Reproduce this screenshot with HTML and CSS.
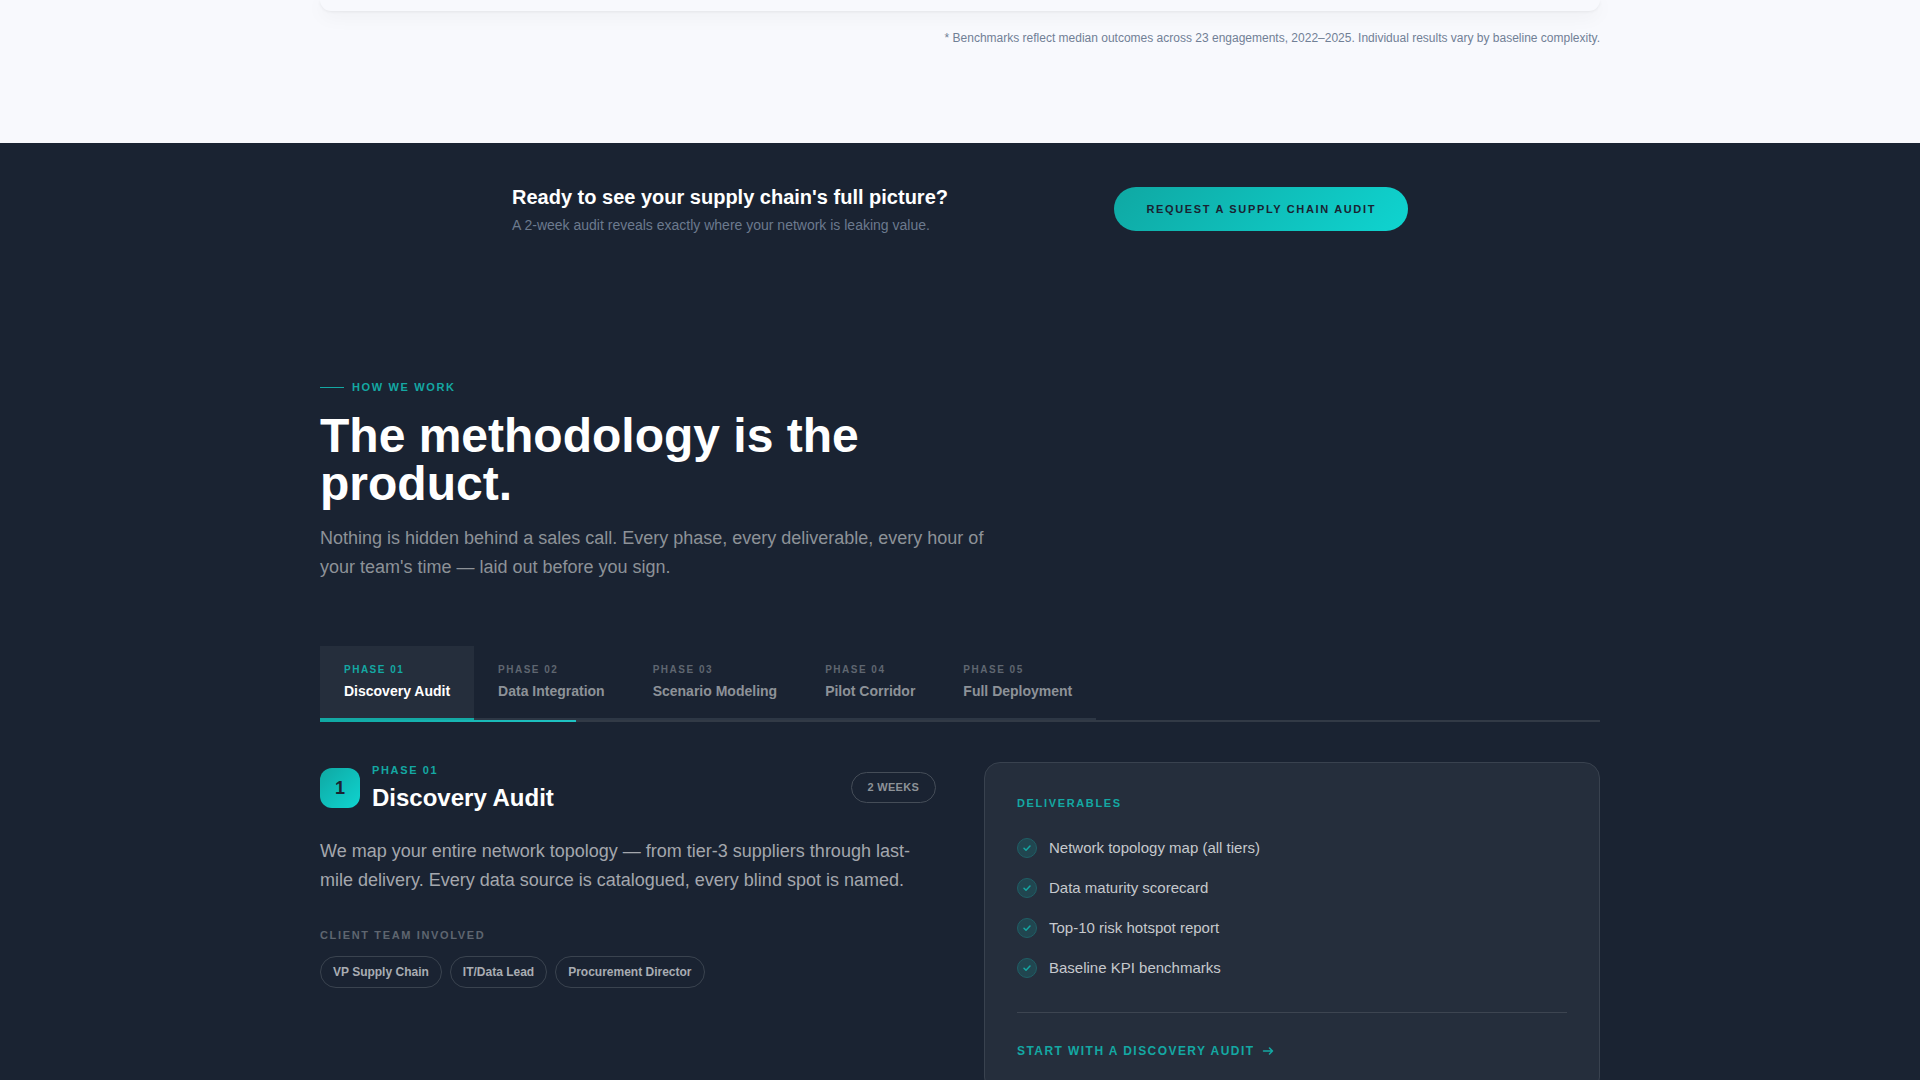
FILE: index.html
```html
<!DOCTYPE html>
<html lang="en">

<head>
    <meta charset="UTF-8">
    <meta name="viewport" content="width=device-width, initial-scale=1.0">
    <title>How we work</title>
    <link rel="stylesheet" href="styles.css">
</head>

<body>
    <section class="benchmarks">
        <div class="container">
            <div class="benchmarks-card"></div>
            <p class="footnote">* Benchmarks reflect median outcomes across 23 engagements, 2022–2025. Individual results vary by baseline complexity.</p>
        </div>
    </section>

    <section class="cta">
        <div class="cta-inner">
            <div>
                <h3 class="cta-title">Ready to see your supply chain's full picture?</h3>
                <p class="cta-text">A 2-week audit reveals exactly where your network is leaking value.</p>
            </div>
            <button class="cta-button" type="button">REQUEST A SUPPLY CHAIN AUDIT</button>
        </div>
    </section>

    <section class="method">
        <div class="container">
            <div class="eyebrow">HOW WE WORK</div>
            <h2 class="method-title">The methodology is the product.</h2>
            <p class="method-lead">Nothing is hidden behind a sales call. Every phase, every deliverable, every hour of your team's time — laid out before you sign.</p>

            <div class="tabs" role="tablist">
                <button class="tab active" type="button" role="tab" aria-selected="true">
                    <span class="tab-phase">PHASE 01</span>
                    <span class="tab-name">Discovery Audit</span>
                </button>
                <button class="tab" type="button" role="tab">
                    <span class="tab-phase">PHASE 02</span>
                    <span class="tab-name">Data Integration</span>
                </button>
                <button class="tab" type="button" role="tab">
                    <span class="tab-phase">PHASE 03</span>
                    <span class="tab-name">Scenario Modeling</span>
                </button>
                <button class="tab" type="button" role="tab">
                    <span class="tab-phase">PHASE 04</span>
                    <span class="tab-name">Pilot Corridor</span>
                </button>
                <button class="tab" type="button" role="tab">
                    <span class="tab-phase">PHASE 05</span>
                    <span class="tab-name">Full Deployment</span>
                </button>
            </div>
            <div class="progress">
                <div class="progress-bar" style="width: 20%"></div>
            </div>

            <div class="panel">
                <div>
                    <div class="phase-head">
                        <div class="phase-number">1</div>
                        <div>
                            <div class="label teal">PHASE 01</div>
                            <h3 class="phase-title">Discovery Audit</h3>
                        </div>
                        <span class="duration">2 WEEKS</span>
                    </div>
                    <p class="phase-text">We map your entire network topology — from tier-3 suppliers through last-mile delivery. Every data source is catalogued, every blind spot is named.</p>
                    <div class="label muted">CLIENT TEAM INVOLVED</div>
                    <ul class="team">
                        <li>VP Supply Chain</li>
                        <li>IT/Data Lead</li>
                        <li>Procurement Director</li>
                    </ul>
                </div>

                <div class="card">
                    <div class="label teal">DELIVERABLES</div>
                    <ul class="deliverables">
                        <li>
                            <span class="check"><svg width="10" height="10" viewBox="0 0 10 10"><path d="M2 5.2 4 7.2 8 3" /></svg></span>
                            Network topology map (all tiers)
                        </li>
                        <li>
                            <span class="check"><svg width="10" height="10" viewBox="0 0 10 10"><path d="M2 5.2 4 7.2 8 3" /></svg></span>
                            Data maturity scorecard
                        </li>
                        <li>
                            <span class="check"><svg width="10" height="10" viewBox="0 0 10 10"><path d="M2 5.2 4 7.2 8 3" /></svg></span>
                            Top-10 risk hotspot report
                        </li>
                        <li>
                            <span class="check"><svg width="10" height="10" viewBox="0 0 10 10"><path d="M2 5.2 4 7.2 8 3" /></svg></span>
                            Baseline KPI benchmarks
                        </li>
                    </ul>
                    <div class="card-footer">
                        <a class="card-link" href="#">START WITH A DISCOVERY AUDIT
                            <svg width="12" height="12" viewBox="0 0 12 12"><path d="M1.500 6h9M7.500 3l3 3-3 3" /></svg>
                        </a>
                    </div>
                </div>
            </div>
        </div>
    </section>
</body>

</html>
```

FILE: styles.css
```css
* {
    box-sizing: border-box;
    margin: 0;
    padding: 0;
}

body {
    font-family: "Liberation Sans", Arial, sans-serif;
    background-color: #1a2332;
    color: #ffffff;
}

ul {
    list-style: none;
}

button {
    font-family: inherit;
    border: none;
    cursor: pointer;
}

.container {
    max-width: 1280px;
    margin: 0 auto;
}

/* end of the benchmarks section */
.benchmarks {
    background-color: #f8f9fd;
    padding-bottom: 96px;
}

.benchmarks-card {
    height: 11px;
    border-radius: 0 0 16px 16px;
    background-color: #f8f9fd;
    box-shadow: 0 1px 3px rgba(0, 0, 0, 0.06), 0 4px 20px rgba(0, 0, 0, 0.06);
}

.footnote {
    margin-top: 18px;
    font-size: 12px;
    line-height: 18px;
    text-align: right;
    color: #718096;
}

/* call to action */
.cta {
    padding: 40px 0;
}

.cta-inner {
    max-width: 896px;
    margin: 0 auto;
    display: flex;
    align-items: center;
    justify-content: space-between;
}

.cta-title {
    font-size: 20px;
    line-height: 28px;
}

.cta-text {
    margin-top: 4px;
    font-size: 14px;
    line-height: 20px;
    color: #6c7a8e;
}

.cta-button {
    height: 44px;
    padding: 0 32px;
    border-radius: 22px;
    background: linear-gradient(135deg, #0fa8a3, #0fd4d0);
    color: #1a2332;
    font-size: 11px;
    font-weight: bold;
    letter-spacing: 0.15em;
}

/* methodology */
.method {
    padding: 104px 0 96px;
}

.eyebrow {
    display: flex;
    align-items: center;
    gap: 8px;
    font-size: 11px;
    font-weight: bold;
    line-height: 17px;
    letter-spacing: 0.15em;
    color: #14a8a3;
}

.eyebrow::before {
    content: "";
    width: 24px;
    height: 1px;
    background-color: #14a8a3;
}

.method-title {
    max-width: 672px;
    margin-top: 16px;
    font-size: 48px;
    line-height: 48px;
}

.method-lead {
    max-width: 672px;
    margin-top: 16px;
    font-size: 18px;
    line-height: 29px;
    color: #8d9298;
}

.tabs {
    display: flex;
    margin-top: 64px;
}

.tab {
    display: flex;
    flex-direction: column;
    gap: 4px;
    padding: 16px 24px;
    border-bottom: 2px solid #2d3745;
    background: none;
    text-align: left;
    color: #8d9298;
}

.tab-phase {
    font-size: 10px;
    font-weight: bold;
    line-height: 15px;
    letter-spacing: 0.15em;
    color: #5f6670;
}

.tab-name {
    font-size: 14px;
    font-weight: bold;
    line-height: 21px;
}

.tab.active {
    background-color: #252e3c;
    border-bottom-color: #14a8a3;
    color: #ffffff;
}

.tab.active .tab-phase {
    color: #14a8a3;
}

.progress {
    height: 2px;
    background-color: #323a46;
}

.progress-bar {
    height: 100%;
    background: linear-gradient(90deg, #0fa8a3, #1fc4c4);
}

/* selected phase */
.panel {
    display: grid;
    grid-template-columns: 1fr 1fr;
    gap: 48px;
    margin-top: 40px;
}

.label {
    font-size: 11px;
    font-weight: bold;
    line-height: 17px;
    letter-spacing: 0.15em;
}

.teal {
    color: #14a8a3;
}

.muted {
    color: #5f6670;
}

.phase-head {
    display: flex;
    align-items: center;
    gap: 12px;
}

.phase-number {
    width: 40px;
    height: 40px;
    border-radius: 12px;
    background: linear-gradient(135deg, #0fa8a3, #0fd4d0);
    color: #1a2332;
    font-size: 18px;
    font-weight: bold;
    line-height: 40px;
    text-align: center;
}

.phase-title {
    margin-top: 4px;
    font-size: 24px;
    line-height: 30px;
}

.duration {
    margin-left: auto;
    padding: 6px 16px;
    border: 1px solid #454d58;
    border-radius: 16px;
    font-size: 11px;
    font-weight: bold;
    line-height: 17px;
    letter-spacing: 0.025em;
    color: #8d9298;
}

.phase-text {
    margin: 24px 0 32px;
    font-size: 18px;
    line-height: 29px;
    color: #a4a7ad;
}

.team {
    display: flex;
    flex-wrap: wrap;
    gap: 8px;
    margin-top: 12px;
}

.team li {
    padding: 6px 12px;
    border: 1px solid #3a434f;
    border-radius: 16px;
    font-size: 12px;
    font-weight: bold;
    line-height: 18px;
    color: #a9adb3;
}

.card {
    padding: 32px;
    border: 1px solid #39424f;
    border-radius: 16px;
    background-color: #252e3c;
}

.deliverables {
    display: flex;
    flex-direction: column;
    gap: 16px;
    margin-top: 24px;
}

.deliverables li {
    display: flex;
    align-items: center;
    gap: 12px;
    font-size: 15px;
    line-height: 24px;
    color: #c6c9cd;
}

.check {
    display: flex;
    align-items: center;
    justify-content: center;
    width: 20px;
    height: 20px;
    border: 1px solid #1f5f66;
    border-radius: 50%;
    background-color: #214650;
}

.check path,
.card-link path {
    fill: none;
    stroke: #14a8a3;
    stroke-width: 1.5;
    stroke-linecap: round;
    stroke-linejoin: round;
}

.card-footer {
    margin-top: 32px;
    padding-top: 28px;
    border-top: 1px solid #3d4551;
}

.card-link {
    display: inline-flex;
    align-items: center;
    gap: 8px;
    font-size: 12px;
    font-weight: bold;
    line-height: 18px;
    letter-spacing: 0.12em;
    text-decoration: none;
    color: #14a8a3;
}
```
